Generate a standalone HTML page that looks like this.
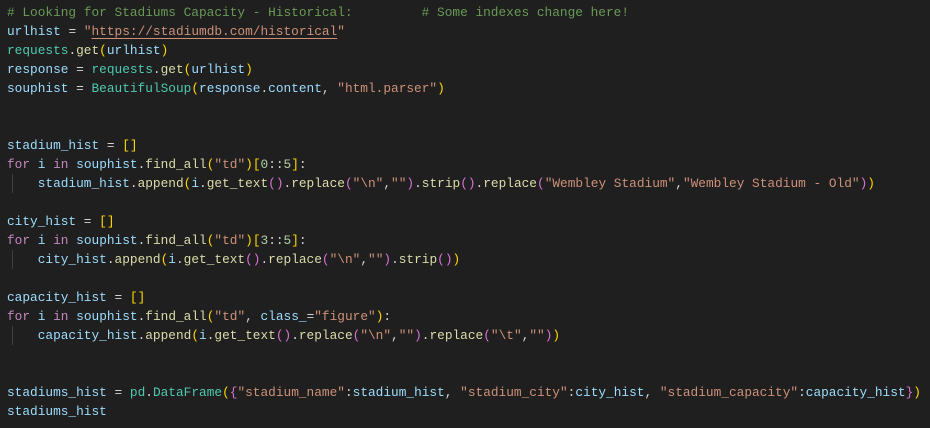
<!DOCTYPE html>
<html><head><meta charset="utf-8"><style>
html,body{margin:0;padding:0;background:#1f1f1f;width:930px;height:428px;overflow:hidden}
pre{margin:0;position:absolute;left:7px;top:3px;font-family:"Liberation Mono",monospace;font-size:12.8px;line-height:19px;color:#d4d4d4}
.v{color:#9cdcfe}.f{color:#dcdcaa}.c{color:#4ec9b0}.s{color:#ce9178}.m{color:#6a9955}.k{color:#c586c0}.n{color:#b5cea8}
.b1{color:#ffd700}.b2{color:#da70d6}.b3{color:#179fff}
.u{text-decoration:underline;text-decoration-color:#ce9178;text-underline-offset:3px}
.g{position:absolute;left:12px;width:1px;height:19px;background:#404040}
</style></head><body>
<div class="g" style="top:174px"></div>
<div class="g" style="top:250px"></div>
<div class="g" style="top:326px"></div>
<pre><span class="m"># Looking for Stadiums Capacity - Historical:         # Some indexes change here!</span>
<span class="v">urlhist</span> = <span class="s">"<span class="u">https://stadiumdb.com/historical</span>"</span>
<span class="c">requests</span>.<span class="f">get</span><span class="b1">(</span><span class="v">urlhist</span><span class="b1">)</span>
<span class="v">response</span> = <span class="c">requests</span>.<span class="f">get</span><span class="b1">(</span><span class="v">urlhist</span><span class="b1">)</span>
<span class="v">souphist</span> = <span class="c">BeautifulSoup</span><span class="b1">(</span><span class="v">response</span>.<span class="v">content</span>, <span class="s">"html.parser"</span><span class="b1">)</span>


<span class="v">stadium_hist</span> = <span class="b1">[]</span>
<span class="k">for</span> <span class="v">i</span> <span class="k">in</span> <span class="v">souphist</span>.<span class="f">find_all</span><span class="b1">(</span><span class="s">"td"</span><span class="b1">)</span><span class="b1">[</span><span class="n">0</span>::<span class="n">5</span><span class="b1">]</span>:
    <span class="v">stadium_hist</span>.<span class="f">append</span><span class="b1">(</span><span class="v">i</span>.<span class="f">get_text</span><span class="b2">()</span>.<span class="f">replace</span><span class="b2">(</span><span class="s">"\n"</span>,<span class="s">""</span><span class="b2">)</span>.<span class="f">strip</span><span class="b2">()</span>.<span class="f">replace</span><span class="b2">(</span><span class="s">"Wembley Stadium"</span>,<span class="s">"Wembley Stadium - Old"</span><span class="b2">)</span><span class="b1">)</span>

<span class="v">city_hist</span> = <span class="b1">[]</span>
<span class="k">for</span> <span class="v">i</span> <span class="k">in</span> <span class="v">souphist</span>.<span class="f">find_all</span><span class="b1">(</span><span class="s">"td"</span><span class="b1">)</span><span class="b1">[</span><span class="n">3</span>::<span class="n">5</span><span class="b1">]</span>:
    <span class="v">city_hist</span>.<span class="f">append</span><span class="b1">(</span><span class="v">i</span>.<span class="f">get_text</span><span class="b2">()</span>.<span class="f">replace</span><span class="b2">(</span><span class="s">"\n"</span>,<span class="s">""</span><span class="b2">)</span>.<span class="f">strip</span><span class="b2">()</span><span class="b1">)</span>

<span class="v">capacity_hist</span> = <span class="b1">[]</span>
<span class="k">for</span> <span class="v">i</span> <span class="k">in</span> <span class="v">souphist</span>.<span class="f">find_all</span><span class="b1">(</span><span class="s">"td"</span>, <span class="v">class_</span>=<span class="s">"figure"</span><span class="b1">)</span>:
    <span class="v">capacity_hist</span>.<span class="f">append</span><span class="b1">(</span><span class="v">i</span>.<span class="f">get_text</span><span class="b2">()</span>.<span class="f">replace</span><span class="b2">(</span><span class="s">"\n"</span>,<span class="s">""</span><span class="b2">)</span>.<span class="f">replace</span><span class="b2">(</span><span class="s">"\t"</span>,<span class="s">""</span><span class="b2">)</span><span class="b1">)</span>


<span class="v">stadiums_hist</span> = <span class="c">pd</span>.<span class="c">DataFrame</span><span class="b1">(</span><span class="b2">{</span><span class="s">"stadium_name"</span>:<span class="v">stadium_hist</span>, <span class="s">"stadium_city"</span>:<span class="v">city_hist</span>, <span class="s">"stadium_capacity"</span>:<span class="v">capacity_hist</span><span class="b2">}</span><span class="b1">)</span>
<span class="v">stadiums_hist</span></pre>
</body></html>
